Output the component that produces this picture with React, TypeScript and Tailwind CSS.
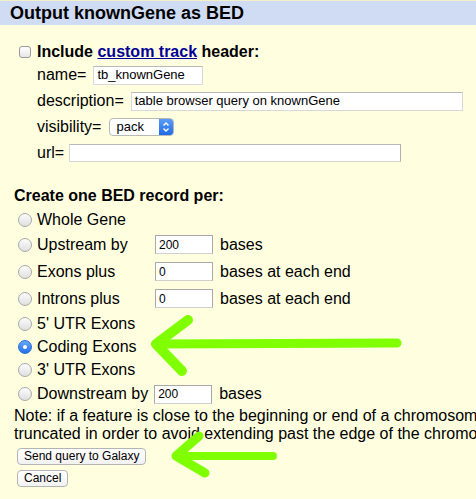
import React from "react";

const Radio = ({ checked = false }: { checked?: boolean }) =>
  checked ? (
    <span className="flex h-[14px] w-[14px] shrink-0 items-center justify-center rounded-full border border-[#2a6fd6] bg-gradient-to-b from-[#6aa8f7] to-[#1f6ee8]">
      <span className="block h-[4px] w-[4px] rounded-full bg-white" />
    </span>
  ) : (
    <span className="block h-[14px] w-[14px] shrink-0 rounded-full border border-[#a8a8a8] bg-gradient-to-b from-[#fcfcfc] to-[#e0e0e0]" />
  );

const SmallInput = ({ value }: { value: string }) => (
  <div className="flex h-[19px] w-[58px] items-center border border-[#a9a9a9] border-b-[#d0d0d0] bg-white pl-[3px] text-[12px] text-black">
    {value}
  </div>
);

const OptionRow = ({
  label,
  checked,
  input,
  after,
  tall,
}: {
  label: string;
  checked?: boolean;
  input?: string;
  after?: string;
  tall?: boolean;
}) => (
  <div className={`flex items-center ${tall ? "h-[27px]" : "h-[23px]"}`}>
    <div className="ml-[18px] w-[19px]">
      <Radio checked={checked} />
    </div>
    <span className="w-[118px] whitespace-nowrap text-[16px]">{label}</span>
    {input !== undefined && <SmallInput value={input} />}
    {after && <span className="ml-[7px] whitespace-nowrap text-[16px]">{after}</span>}
  </div>
);

export default function App() {
  return (
    <div className="relative h-[499px] w-[476px] overflow-hidden bg-[#ffffe0] font-['Liberation_Sans',Arial,sans-serif] text-black">
      <div className="h-[1px] bg-[#f3efc8]" />
      <div className="flex h-[24px] items-center bg-[#d0dcf3] pl-[10px] text-[18px] font-bold">
        Output knownGene as BED
      </div>

      {/* custom track header */}
      <div className="mt-[17px] flex h-[20px] items-center">
        <span className="ml-[19px] h-[12px] w-[12px] rounded-[3px] border border-[#9a9a9a] bg-gradient-to-b from-white to-[#e6e6e6]" />
        <span className="ml-[6px] text-[16px] font-bold">
          Include{" "}
          <a className="text-[#000099] underline" href="#">
            custom track
          </a>{" "}
          header:
        </span>
      </div>
      <div className="ml-[37px]">
        <div className="flex h-[26px] items-center text-[16px]">
          name=
          <div className="ml-[7px] flex h-[19px] w-[110px] items-center border border-[#d8d8d8] border-t-[#b8b8b8] bg-white pl-[3px] text-[13px]">
            tb_knownGene
          </div>
        </div>
        <div className="flex h-[26px] items-center text-[16px]">
          description=
          <div className="ml-[7px] flex h-[19px] w-[332px] items-center border border-[#d8d8d8] border-t-[#b8b8b8] bg-white pl-[3px] text-[13px]">
            table browser query on knownGene
          </div>
        </div>
        <div className="flex h-[26px] items-center text-[16px]">
          visibility=
          <div className="ml-[8px] flex h-[18px] w-[65px] items-center overflow-hidden rounded-[4px] border border-[#b9b9b9] bg-white text-[13px]">
            <span className="flex-1 pl-[6px]">pack</span>
            <span className="flex h-full w-[14px] items-center justify-center bg-gradient-to-b from-[#5b9cf5] to-[#1e6ae6]">
              <svg width="8" height="12" viewBox="0 0 8 12" fill="none" stroke="white" strokeWidth="1.4">
                <path d="M1.5 4.5 L4 2 L6.5 4.5" />
                <path d="M1.5 7.5 L4 10 L6.5 7.5" />
              </svg>
            </span>
          </div>
        </div>
        <div className="flex h-[26px] items-center text-[16px]">
          url=
          <div className="ml-[5px] h-[18px] w-[332px] border border-[#d8d8d8] border-t-[#b8b8b8] border-r-[#b0b0b0] bg-white" />
        </div>
      </div>

      {/* BED record options */}
      <div className="mt-[20px] flex h-[20px] items-center pl-[14px] text-[16px] font-bold">
        Create one BED record per:
      </div>
      <div className="mt-[2px]">
        <OptionRow label="Whole Gene" />
        <OptionRow label="Upstream by" input="200" after="bases" tall />
        <OptionRow label="Exons plus" input="0" after="bases at each end" tall />
        <OptionRow label="Introns plus" input="0" after="bases at each end" tall />
        <OptionRow label="5' UTR Exons" />
        <OptionRow label="Coding Exons" checked />
        <OptionRow label="3' UTR Exons" />
        <div className="flex h-[26px] items-center">
          <div className="ml-[18px] w-[19px]">
            <Radio />
          </div>
          <span className="whitespace-nowrap text-[16px]">Downstream by</span>
          <div className="ml-[6px]">
            <SmallInput value="200" />
          </div>
          <span className="ml-[7px] text-[16px]">bases</span>
        </div>
      </div>

      <div className="whitespace-nowrap pl-[14px] text-[16px] leading-[18px]">
        <div>Note: if a feature is close to the beginning or end of a chromosome, it will be</div>
        <div>truncated in order to avoid extending past the edge of the chromosome.</div>
      </div>

      <div className="mt-[5px] flex flex-col items-start gap-[5px] pl-[17px]">
        <button className="h-[17px] rounded-[4px] border border-[#b4b4b4] bg-gradient-to-b from-white to-[#f2f2f2] px-[6px] text-[12px] leading-[15px]">
          Send query to Galaxy
        </button>
        <button className="h-[17px] rounded-[4px] border border-[#b4b4b4] bg-gradient-to-b from-white to-[#f2f2f2] px-[6px] text-[12px] leading-[15px]">
          Cancel
        </button>
      </div>

      {/* green annotation arrows */}
      <svg
        className="pointer-events-none absolute left-0 top-0"
        width="476"
        height="499"
        viewBox="0 0 476 499"
        fill="none"
        stroke="#80ff00"
        strokeLinecap="round"
        strokeLinejoin="round"
      >
        <path d="M397 343 L156 344" strokeWidth="9" />
        <path d="M188 320 L156 344 L182 371" strokeWidth="10" />
        <path d="M273 456 L176 456" strokeWidth="8" />
        <path d="M199 436 L176 456 L205 473" strokeWidth="9" />
      </svg>
    </div>
  );
}
